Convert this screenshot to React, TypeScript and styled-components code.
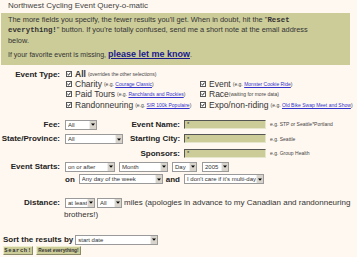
import React from "react";
import styled, { createGlobalStyle } from "styled-components";

const Global = createGlobalStyle`
  html, body { margin: 0; padding: 0; background: #fff8f0; }
  body {
    font-family: "Liberation Sans", Arial, sans-serif;
    color: #333;
    width: 357px;
    height: 257px;
    overflow: hidden;
  }
`;

const Page = styled.div`
  width: 357px;
  display: flex;
  flex-direction: column;
`;

const Title = styled.div`
  height: 11px;
  line-height: 11px;
  font-size: 8px;
  color: #444;
  padding-left: 8px;
`;

const Notice = styled.div`
  margin: 2px 0 0 1px;
  width: 349px;
  height: 52px;
  box-sizing: border-box;
  background: #cccc99;
  padding: 1.5px 20px 0 7px;
  font-size: 7.4px;
  line-height: 9.5px;
  color: #333;
`;

const P = styled.p<{ $gap?: number; $lh?: number; $fs?: number }>`
  margin: ${(p) => p.$gap ?? 0}px 0 0 0;
  line-height: ${(p) => p.$lh ?? 9.5}px;
  white-space: ${(p) => (p.$fs ? "nowrap" : "normal")};
  ${(p) => (p.$fs ? `font-size: ${p.$fs}px;` : "")}
`;

const Mono = styled.span`
  font-family: "Liberation Mono", "Courier New", monospace;
  font-weight: bold;
  font-size: 7.4px;
`;

const BigLink = styled.a`
  color: #1a1a8c;
  font-weight: bold;
  font-size: 9px;
  text-decoration: underline;
`;

const Form = styled.div`
  margin-top: 4px;
  display: flex;
  flex-direction: column;
`;

const FormRow = styled.div<{ $h?: number; $mt?: number }>`
  display: grid;
  grid-template-columns: 60px 1fr;
  column-gap: 4px;
  align-items: center;
  margin-top: ${(p) => p.$mt ?? 0}px;
  ${(p) => (p.$h ? `height: ${p.$h}px;` : "")}
`;

const Label = styled.span<{ $top?: boolean }>`
  font-size: 8px;
  font-weight: bold;
  text-align: right;
  color: #222;
  white-space: nowrap;
  align-self: ${(p) => (p.$top ? "start" : "center")};
  line-height: ${(p) => (p.$top ? "12px" : "normal")};
`;

const CheckGrid = styled.div`
  display: grid;
  grid-template-columns: 134px 1fr;
  grid-auto-rows: 10.2px;
  align-items: center;
`;

const EventLabelCell = styled.div`
  display: grid;
  grid-template-rows: 10.2px 30.6px;
  align-items: center;
  justify-items: end;
  align-self: start;
`;

const CheckItem = styled.label`
  display: flex;
  align-items: center;
  gap: 3px;
  padding-left: 2px;
  white-space: nowrap;
  font-size: 8.5px;
  color: #333;
`;

const Box = styled.span`
  width: 6px;
  height: 6px;
  box-sizing: border-box;
  border: 1px solid #555;
  background: #fff;
  display: inline-flex;
  align-items: center;
  justify-content: center;
  flex: none;
`;

const Strong = styled.b`
  font-weight: bold;
`;

const Hint = styled.span<{ $ml?: number }>`
  font-size: 5px;
  color: #444;
  margin-left: ${(p) => p.$ml ?? 0}px;
  white-space: nowrap;
`;

const HintLink = styled.a`
  color: #3333cc;
  text-decoration: underline;
`;

const FieldGrid = styled.div`
  display: grid;
  grid-template-columns: 60px 62px 50px 82px auto;
  column-gap: 4px;
  grid-auto-rows: 14.5px;
  align-items: center;
  margin-top: 7px;
`;

const SelWrap = styled.span<{ $w: number; $mr?: number }>`
  display: inline-flex;
  align-items: stretch;
  width: ${(p) => p.$w}px;
  height: 10px;
  box-sizing: border-box;
  border: 1px solid #9a9a9a;
  background: #fff;
  vertical-align: middle;
  margin-right: ${(p) => p.$mr ?? 0}px;
  margin-left: 1px;
  flex: none;
`;

const Sel = styled.select`
  appearance: none;
  -webkit-appearance: none;
  border: none;
  outline: none;
  background: transparent;
  flex: 1;
  min-width: 0;
  height: 8px;
  padding: 0 0 0 2px;
  margin: 0;
  font-family: "Liberation Sans", Arial, sans-serif;
  font-size: 6px;
  line-height: 8px;
  color: #333;
`;

const Arrow = styled.span`
  width: 7px;
  flex: none;
  background: #d8d4cc;
  border-left: 1px solid #eee;
  box-sizing: border-box;
  display: flex;
  align-items: center;
  justify-content: center;
`;

const TextIn = styled.input`
  width: 82px;
  height: 9px;
  box-sizing: border-box;
  background: #cccc99;
  border: 1px solid;
  border-color: #555 #e6e6cc #e6e6cc #555;
  padding: 0 2px;
  margin: 0;
  font-size: 6px;
  line-height: 7px;
  color: #333;
  font-family: "Liberation Sans", Arial, sans-serif;
  outline: none;
`;

const Inline = styled.div`
  display: flex;
  align-items: center;
  gap: 2px;
`;

const Word = styled.span`
  font-size: 8px;
  font-weight: bold;
  color: #222;
  margin: 0 1px;
`;

const DistanceText = styled.div`
  font-size: 8px;
  line-height: 12px;
  color: #333;
  padding-right: 4px;
`;

const SortRow = styled.div`
  display: flex;
  align-items: center;
  gap: 1px;
  height: 12px;
  padding-left: 3px;
  margin-top: 12.5px;
`;

const SortLabel = styled.span`
  font-size: 8px;
  font-weight: bold;
  color: #222;
`;

const Buttons = styled.div`
  display: flex;
  align-items: center;
  gap: 3px;
  height: 9px;
  padding-left: 3px;
`;

const Btn = styled.button<{ $w: number; $mono?: boolean }>`
  width: ${(p) => p.$w}px;
  height: 9px;
  box-sizing: border-box;
  padding: 0;
  margin: 0;
  background: #cccc99;
  border: 1px solid;
  border-color: #eeeecc #8a8a66 #8a8a66 #eeeecc;
  color: #333;
  font-weight: bold;
  font-size: ${(p) => (p.$mono ? 5.5 : 4.8)}px;
  letter-spacing: ${(p) => (p.$mono ? 0.6 : 0)}px;
  font-family: ${(p) =>
    p.$mono ? `"Liberation Mono", monospace` : `"Liberation Sans", Arial, sans-serif`};
  line-height: 7px;
`;

const Check = () => (
  <Box>
    <svg width="4" height="4" viewBox="0 0 4 4">
      <path d="M0.4 2 L1.5 3.1 L3.6 0.6" stroke="#000" strokeWidth="0.9" fill="none" />
    </svg>
  </Box>
);

const Select = ({ w, value, mr }: { w: number; value: string; mr?: number }) => (
  <SelWrap $w={w} $mr={mr}>
    <Sel defaultValue={value}>
      <option>{value}</option>
    </Sel>
    <Arrow>
      <svg width="4" height="3" viewBox="0 0 4 3">
        <path d="M0 0.5 H4 L2 2.7 Z" fill="#000" />
      </svg>
    </Arrow>
  </SelWrap>
);

export default function App() {
  return (
    <Page>
      <Global />
      <Title>Northwest Cycling Event Query-o-matic</Title>
      <Notice>
        <P>
          The more fields you specify, the fewer results you'll get. When in doubt, hit the "
          <Mono>Reset everything!</Mono>" button. If you're totally confused, send me a short note
          at the email address below.
        </P>
        <P $gap={4} $lh={11} $fs={7}>
          If your favorite event is missing, <BigLink href="#">please let me know</BigLink>.
        </P>
      </Notice>

      <Form>
        <FormRow>
          <EventLabelCell>
            <Label>Event Type:</Label>
          </EventLabelCell>
          <CheckGrid>
            <CheckItem>
              <Check />
              <Strong>All</Strong>
              <Hint $ml={-1}>(overrides the other selections)</Hint>
            </CheckItem>
            <span />
            <CheckItem>
              <Check />
              Charity
              <Hint $ml={-1}>
                (e.g. <HintLink href="#">Courage Classic</HintLink>)
              </Hint>
            </CheckItem>
            <CheckItem>
              <Check />
              Event
              <Hint $ml={-1}>
                (e.g. <HintLink href="#">Monster Cookie Ride</HintLink>)
              </Hint>
            </CheckItem>
            <CheckItem>
              <Check />
              Paid Tours
              <Hint $ml={-1}>
                (e.g. <HintLink href="#">Ranchlands and Rockies</HintLink>)
              </Hint>
            </CheckItem>
            <CheckItem>
              <Check />
              Race
              <Hint $ml={-3}>(waiting for more data)</Hint>
            </CheckItem>
            <CheckItem>
              <Check />
              Randonneuring
              <Hint $ml={-1}>
                (e.g. <HintLink href="#">SIR 100k Populaire</HintLink>)
              </Hint>
            </CheckItem>
            <CheckItem>
              <Check />
              Expo/non-riding
              <Hint $ml={-1}>
                (e.g. <HintLink href="#">Old Bike Swap Meet and Show</HintLink>)
              </Hint>
            </CheckItem>
          </CheckGrid>
        </FormRow>

        <FieldGrid>
          <Label>Fee:</Label>
          <span>
            <Select w={32} value="All" />
          </span>
          <Label>Event Name:</Label>
          <TextIn defaultValue="*" />
          <Hint>e.g. STP or Seattle*Portland</Hint>

          <Label>State/Province:</Label>
          <span>
            <Select w={58} value="All" />
          </span>
          <Label>Starting City:</Label>
          <TextIn defaultValue="*" />
          <Hint>e.g. Seattle</Hint>

          <span />
          <span />
          <Label>Sponsors:</Label>
          <TextIn defaultValue="*" />
          <Hint>e.g. Group Health</Hint>
        </FieldGrid>

        <FormRow $h={12.5}>
          <Label>Event Starts:</Label>
          <Inline>
            <Select w={50} value="on or after" mr={1} />
            <Select w={49} value="Month" mr={1} />
            <Select w={25} value="Day" mr={2} />
            <Select w={27} value="2005" />
          </Inline>
        </FormRow>
        <FormRow $h={12.5}>
          <span />
          <Inline>
            <Word>on</Word>
            <Select w={84} value="Any day of the week" />
            <Word>and</Word>
            <Select w={80} value="I don't care if it's multi-day" />
          </Inline>
        </FormRow>

        <FormRow $mt={11.75}>
          <Label $top>Distance:</Label>
          <DistanceText>
            <Select w={30} value="at least" mr={1} />
            <Select w={25} value="All" mr={2} />
            miles (apologies in advance to my Canadian and randonneuring brothers!)
          </DistanceText>
        </FormRow>
      </Form>

      <SortRow>
        <SortLabel>Sort the results by</SortLabel>
        <Select w={83} value="start date" />
      </SortRow>
      <Buttons>
        <Btn $w={30} $mono>
          Search!
        </Btn>
        <Btn $w={45}>Reset everything!</Btn>
      </Buttons>
    </Page>
  );
}
